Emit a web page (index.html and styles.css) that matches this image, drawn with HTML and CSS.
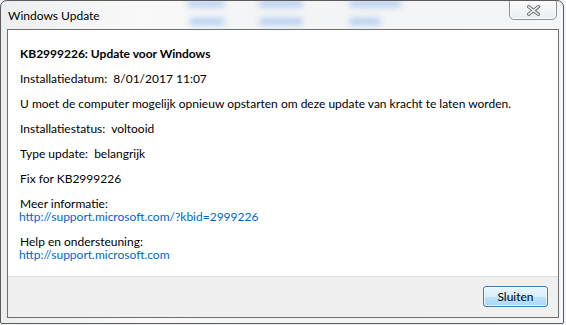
FILE: index.html
```html
<!DOCTYPE html>
<html>
<head>
<meta charset="utf-8">
<link rel="stylesheet" href="styles.css">
</head>
<body>
<div class="window">
  <div class="glass" aria-hidden="true">
    <span class="blob b1"></span><span class="blob b2"></span><span class="blob b3"></span>
    <span class="blob b4"></span><span class="blob b5"></span><span class="blob b6"></span>
  </div>
  <div class="titlebar">
    <span class="title">Windows Update</span>
    <button class="close" aria-label="Sluiten">
      <svg width="13" height="11" viewBox="0 0 13 11">
        <path d="M1.8 1.8 L11.2 9.2 M11.2 1.8 L1.8 9.2" stroke="#70747b" stroke-width="3.4" stroke-linecap="square" fill="none"/>
        <path d="M1.8 1.8 L11.2 9.2 M11.2 1.8 L1.8 9.2" stroke="#f2f3f4" stroke-width="1.4" stroke-linecap="square" fill="none"/>
      </svg>
    </button>
  </div>
  <div class="panel">
    <div class="content">
      <p class="heading">KB2999226: Update voor Windows</p>
      <p>Installatiedatum:&nbsp; 8/01/2017 11:07</p>
      <p>U moet de computer mogelijk opnieuw opstarten om deze update van kracht te laten worden.</p>
      <p>Installatiestatus:&nbsp; voltooid</p>
      <p>Type update:&nbsp; belangrijk</p>
      <p>Fix for KB2999226</p>
      <div class="group">
        <span class="label">Meer informatie:</span>
        <a class="link" href="#">http://support.microsoft.com/?kbid=2999226</a>
      </div>
      <div class="group">
        <span class="label">Help en ondersteuning:</span>
        <a class="link" href="#">http://support.microsoft.com</a>
      </div>
    </div>
    <div class="footer">
      <button class="btn">Sluiten</button>
    </div>
  </div>
</div>
</body>
</html>
```

FILE: styles.css
```css
html, body {
  margin: 0;
  padding: 0;
  width: 566px;
  height: 325px;
  background: #eef2f6;
  overflow: hidden;
}
body {
  font-family: Lato, "Open Sans", sans-serif;
  font-size: 12px;
  color: #000;
}
.window {
  position: relative;
  box-sizing: border-box;
  width: 564px;
  height: 324px;
  border: 1px solid #5b5b5b;
  border-radius: 7px 7px 2px 2px;
  background: linear-gradient(90deg, #eceef0 0%, #f9f9f9 25%, #f3f4f5 45%, #f4f5f6 100%);
  padding: 0 4px 5px 6px;
  display: flex;
  flex-direction: column;
  overflow: hidden;
}
.glass {
  position: absolute;
  left: 0;
  top: 0;
  width: 100%;
  height: 28px;
  pointer-events: none;
}
.blob {
  position: absolute;
  height: 7px;
  border-radius: 4px;
  background: #9ec2ef;
  filter: blur(3px);
  opacity: 0.75;
}
.b1 { left: 186px; top: -1px; width: 38px; }
.b2 { left: 258px; top: -1px; width: 44px; }
.b3 { left: 348px; top: -1px; width: 52px; }
.b4 { left: 188px; top: 17px; width: 36px; }
.b5 { left: 258px; top: 17px; width: 44px; }
.b6 { left: 348px; top: 17px; width: 32px; }
.titlebar {
  position: relative;
  height: 28px;
  display: flex;
  align-items: flex-start;
  justify-content: space-between;
}
.title {
  margin: 7px 0 0 1px;
  font-size: 12px;
  line-height: 15px;
  color: #000;
}
.close {
  margin: -2px 2px 0 0;
  width: 48px;
  height: 21px;
  box-sizing: border-box;
  border: 1px solid #8e9196;
  border-radius: 0 0 5px 5px;
  background: linear-gradient(#fbfbfb, #eceef0);
  box-shadow: inset 0 0 0 1px rgba(255,255,255,0.8);
  display: flex;
  align-items: center;
  justify-content: center;
  padding: 2px 0 0 0;
}
.panel {
  flex: 1;
  border: 1px solid #6f6f6f;
  display: flex;
  flex-direction: column;
  background: #fff;
}
.content {
  flex: 1;
  padding: 16px 12px 0 12px;
}
.content p {
  margin: 0 0 10px 0;
  line-height: 15px;
  white-space: nowrap;
}
.heading {
  font-weight: bold;
}
.group {
  display: flex;
  flex-direction: column;
  align-items: flex-start;
  margin-bottom: 10px;
}
.label {
  line-height: 15px;
  height: 15px;
}
.link {
  line-height: 15px;
  height: 15px;
  margin-top: -2px;
  color: #0066cc;
  text-decoration: none;
  margin-left: -1px;
}
.footer {
  height: 40px;
  background: #f0f0f0;
  border-top: 1px solid #dfdfdf;
  display: flex;
  align-items: center;
  justify-content: flex-end;
  padding-right: 10px;
}
.btn {
  width: 65px;
  height: 21px;
  box-sizing: border-box;
  border: 1px solid #3c7fb1;
  border-radius: 3px;
  background: linear-gradient(#e9f5fc 0%, #d8effb 50%, #bde4fa 51%, #a8d8f4 100%);
  box-shadow: inset 0 0 0 1px rgba(255,255,255,0.7);
  font-family: Lato, "Open Sans", sans-serif;
  font-size: 12px;
  color: #000;
  padding: 0;
  margin-top: -1px;
}
```
